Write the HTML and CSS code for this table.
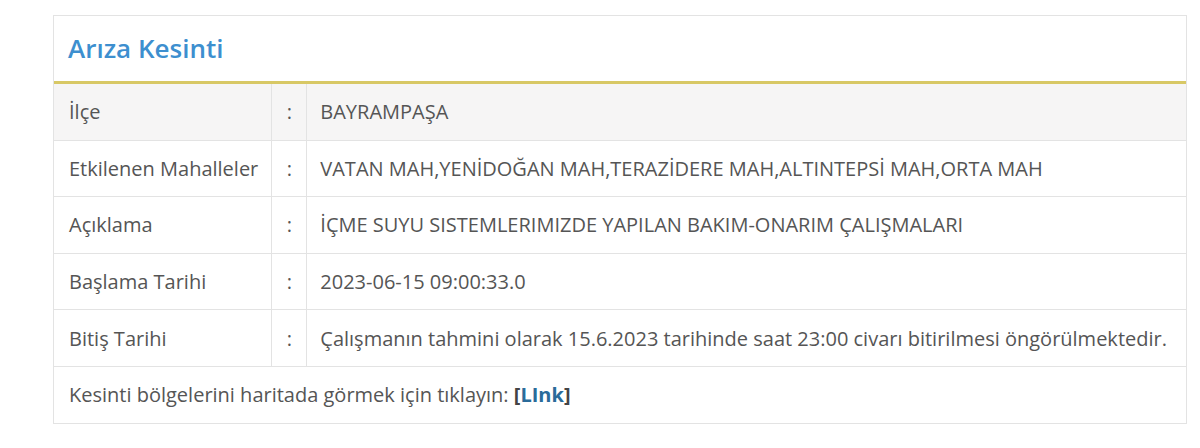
FILE: index.html
```html
<!DOCTYPE html>
<html>
  <head>
    <link rel="stylesheet" href="styles.css">
  </head>
  <body>
    <div class="panel">
      <div class="panel-heading">
        <h3>Arıza Kesinti</h3>
      </div>
      <table class="info">
        <tr class="shaded">
          <td class="label">İlçe</td>
          <td class="sep">:</td>
          <td>BAYRAMPAŞA</td>
        </tr>
        <tr>
          <td class="label">Etkilenen Mahalleler</td>
          <td class="sep">:</td>
          <td>VATAN MAH,YENİDOĞAN MAH,TERAZİDERE MAH,ALTINTEPSİ MAH,ORTA MAH</td>
        </tr>
        <tr>
          <td class="label">Açıklama</td>
          <td class="sep">:</td>
          <td>İÇME SUYU SISTEMLERIMIZDE YAPILAN BAKIM-ONARIM ÇALIŞMALARI</td>
        </tr>
        <tr>
          <td class="label">Başlama Tarihi</td>
          <td class="sep">:</td>
          <td>2023-06-15 09:00:33.0</td>
        </tr>
        <tr>
          <td class="label">Bitiş Tarihi</td>
          <td class="sep">:</td>
          <td>Çalışmanın tahmini olarak 15.6.2023 tarihinde saat 23:00 civarı bitirilmesi öngörülmektedir.</td>
        </tr>
        <tr>
          <td class="map" colspan="3">Kesinti bölgelerini haritada görmek için tıklayın: <b>[<a href="#">LInk</a>]</b></td>
        </tr>
      </table>
    </div>
  </body>
</html>
```

FILE: styles.css
```css
body {
  margin: 0;
  padding: 15px 12px 0 53px;
  background: #fff;
  font-family: "Open Sans", sans-serif;
  color: #555;
}
.panel {
  width: 1134px;
  border: 1px solid #e3e3e3;
  box-sizing: border-box;
}
.panel-heading {
  height: 65px;
  display: flex;
  align-items: center;
  padding: 0 14px;
  border-bottom: 3px solid #d8c865;
}
.panel-heading h3 {
  margin: 0 0 2px;
  font-size: 26px;
  font-weight: 600;
  color: #3d8fcf;
}
.info {
  width: 100%;
  border-collapse: collapse;
  font-size: 20px;
}
.info td {
  height: 55.6px;
  padding: 0 13px;
  border-top: 1px solid #e3e3e3;
  vertical-align: middle;
  white-space: nowrap;
}
.info tr:first-child td {
  border-top: none;
}
.info .shaded td {
  background: #f6f5f5;
}
.info .label {
  width: 189px;
  padding-left: 15px;
  border-right: 1px solid #e3e3e3;
}
.info .sep {
  width: 34px;
  padding: 0;
  text-align: center;
  border-right: 1px solid #e3e3e3;
}
.info .map {
  padding-left: 15px;
}
.info b {
  color: #444;
}
.info a {
  color: #2a6b9a;
  text-decoration: none;
}
```
